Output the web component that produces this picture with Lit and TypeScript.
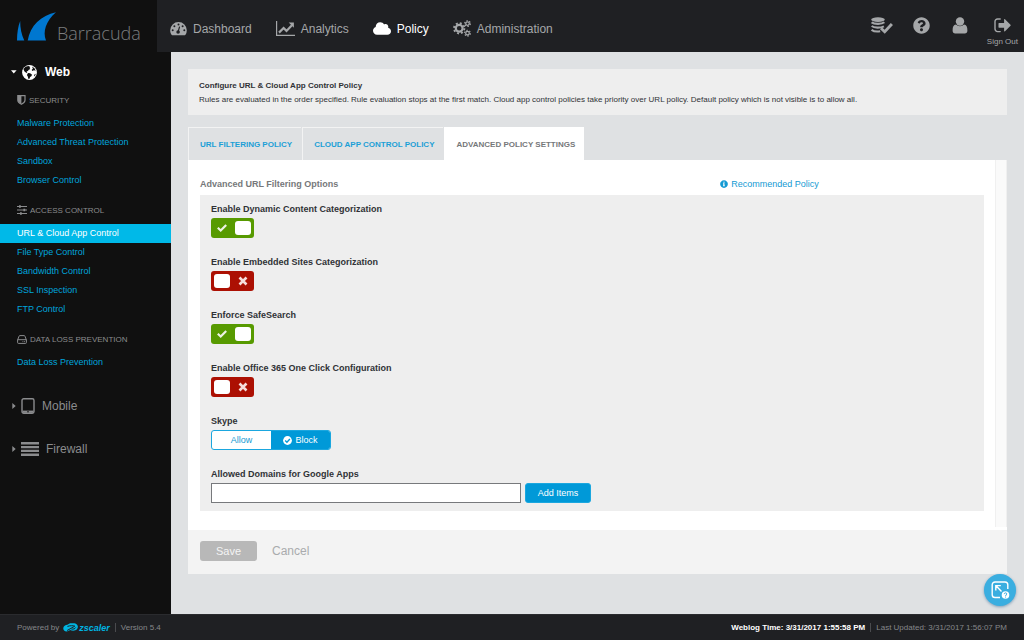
import { LitElement, html, svg, css, nothing } from "lit";
import { customElement, property, state } from "lit/decorators.js";
import { classMap } from "lit/directives/class-map.js";

const dashboardIcon = html`<svg width="17" height="15" viewBox="0 0 17 15" aria-hidden="true">
  <path fill="currentColor" fill-rule="evenodd" d="M8.5 1A8.3 8.3 0 0 0 .2 9.300c0 1.700.5 3.200 1.300 4.500.2.300.4.400.7.400h12.600c.3 0 .5-.1.7-.4a8.300 8.300 0 0 0 1.300-4.500A8.300 8.300 0 0 0 8.500 1z"/>
  <g fill="#1f2023"><circle cx="2.700" cy="9.300" r="1"/><circle cx="4.400" cy="5.200" r="1"/><circle cx="8.500" cy="3.400" r="1"/><circle cx="12.600" cy="5.200" r="1"/><circle cx="14.300" cy="9.300" r="1"/><circle cx="8.100" cy="11" r="1.800"/></g>
  <path stroke="#1f2023" stroke-width="1.100" stroke-linecap="round" d="M8.200 10.500L9.500 6"/>
</svg>`;
const chartIcon = html`<svg width="19" height="15" viewBox="0 0 19 15" fill="none" aria-hidden="true">
  <path stroke="currentColor" stroke-width="1.200" d="M.6 0v14.400H19"/>
  <path stroke="currentColor" stroke-width="2.200" d="M3 11.600l4.600-4.600 2.900 2.900 5.400-5.600"/>
  <path fill="currentColor" d="M12.700 1.600h5.200v5.200z"/>
</svg>`;
const cloudIcon = html`<svg width="18" height="15" viewBox="0 16 640 480" aria-hidden="true"><path fill="currentColor" d="M537.6 226.6c4.100-10.700 6.400-22.400 6.400-34.600 0-53-43-96-96-96-19.700 0-38.100 6-53.300 16.200C367 64.200 315.300 32 256 32c-88.400 0-160 71.600-160 160 0 2.700.1 5.400.2 8.100C40.200 219.800 0 273.200 0 336c0 79.500 64.500 144 144 144h368c70.700 0 128-57.300 128-128 0-61.900-44-113.600-102.400-125.400z"/></svg>`;
const gearsIcon = html`<svg width="18" height="17" viewBox="0 0 18 17" fill="none" stroke="currentColor" aria-hidden="true">
  <circle cx="6.200" cy="8.300" r="3.400" stroke-width="2.200"/>
  <circle cx="6.200" cy="8.300" r="5.200" stroke-width="1.800" stroke-dasharray="2 2.084"/>
  <circle cx="14.500" cy="3.600" r="1.800" stroke-width="1.300"/>
  <circle cx="14.500" cy="3.600" r="2.900" stroke-width="1.100" stroke-dasharray="1.500 1.537"/>
  <circle cx="14.500" cy="13.200" r="1.800" stroke-width="1.300"/>
  <circle cx="14.500" cy="13.200" r="2.900" stroke-width="1.100" stroke-dasharray="1.500 1.537"/>
</svg>`;
const databaseIcon = html`<svg width="22" height="17" viewBox="0 0 22 17" fill="none" aria-hidden="true">
  <ellipse cx="7" cy="2.600" rx="6.800" ry="2.400" fill="currentColor"/>
  <path stroke="currentColor" stroke-width="2.100" d="M.6 5.300c2.500 2.100 10.300 2.100 12.800 0M.6 9c2.500 2.100 9 2.100 12.300.3M.6 12.800c2 1.700 5.600 2 8.600 1.500"/>
  <path stroke="currentColor" stroke-width="2.900" d="M10 11.300l3.700 3.500L20.900 7"/>
</svg>`;
const questionIcon = html`<svg width="17" height="17" viewBox="0 0 512 512" aria-hidden="true"><path fill="currentColor" d="M504 256c0 136.997-111.043 248-248 248S8 392.997 8 256C8 119.083 119.043 8 256 8s248 111.083 248 248zM262.655 90c-54.497 0-89.255 22.957-116.549 63.758-3.536 5.286-2.353 12.415 2.715 16.258l34.699 26.310c5.205 3.947 12.621 3.008 16.665-2.122 17.864-22.658 30.113-35.797 57.303-35.797 20.429 0 45.698 13.148 45.698 32.958 0 14.976-12.363 22.667-32.534 33.976C247.128 238.528 216 254.941 216 296v4c0 6.627 5.373 12 12 12h56c6.627 0 12-5.373 12-12v-1.333c0-28.462 83.186-29.647 83.186-106.667 0-58.002-60.165-102-116.531-102zM256 338c-25.365 0-46 20.635-46 46 0 25.364 20.635 46 46 46s46-20.636 46-46c0-25.365-20.635-46-46-46z"/></svg>`;
const userIcon = html`<svg width="16" height="17" viewBox="0 0 16 17" aria-hidden="true"><g fill="currentColor"><circle cx="8" cy="4.500" r="4.200"/><path d="M4 7.600C1.500 7.800.6 10 .6 13.700c0 1.600 1 2.700 2.600 2.700h9.600c1.600 0 2.600-1.100 2.600-2.700 0-3.700-.9-5.900-3.400-6.100A5.500 5.500 0 0 1 8 9.300a5.500 5.500 0 0 1-4-1.700z"/></g></svg>`;
const signOutIcon = html`<svg width="17" height="15" viewBox="0 0 17 15" fill="none" aria-hidden="true">
  <path stroke="currentColor" stroke-width="1.400" stroke-linecap="round" d="M6.200 1H3.500A2.500 2.500 0 0 0 1 3.500v7.600a2.500 2.500 0 0 0 2.500 2.500h2.700"/>
  <path fill="currentColor" d="M5 4.900h5.100V1.600c0-.5.500-.7.900-.3l5.500 5.500c.3.300.3.700 0 1L11 13.300c-.4.400-.9.200-.9-.3V9.800H5c-.3 0-.5-.2-.5-.5V5.400c0-.3.200-.5.500-.5z"/>
</svg>`;
const globeIcon = html`<svg width="15" height="15" viewBox="0 0 15 15" aria-hidden="true"><circle cx="7.500" cy="7.500" r="7.400" fill="#fff"/>
  <path fill="#101010" d="M2.300 2.900C3.500 1.700 5 1.200 6.500 1.100l1.800.9-.8 1 .9.900-1.600.8-.9 1.400-1.300.3.700 1.100-.6.400L2.700 6.700 1.500 4.500zM10 1.600l2.500 1.700 1.200 2.400-1.700-.5-1.800.7-.5-1.200 1.200-.9zM6 8.100l2.100.2 2 1.400-.8 1.600-1.200.8-.8 1.900-1-.3-.5-2.300-.9-1.500zM12.600 9.200l1.200-.4-.9 2.200-.9.200z"/></svg>`;
const shieldIcon = html`<svg width="9" height="10" viewBox="0 0 9 10" aria-hidden="true"><path fill="none" stroke="currentColor" stroke-width="1.200" d="M.8.7h7.200v4.600c0 1.800-1.500 3-3.600 4C2.300 8.300.8 7.100.8 5.300z"/><path fill="currentColor" d="M1 1h3.400v8C2.300 8 1 7 1 5.300z"/></svg>`;
const slidersIcon = html`<svg width="10" height="10" viewBox="0 0 10 10" aria-hidden="true"><path stroke="currentColor" d="M0 1.500h10M0 5h10M0 8.500h10"/><path fill="currentColor" d="M2 .2h1.800v2.600H2zM6.400 3.700h1.800v2.600H6.400zM3 7.200h1.800v2.600H3z"/></svg>`;
const driveIcon = html`<svg width="10" height="9" viewBox="0 0 10 9" fill="none" stroke="currentColor" aria-hidden="true"><path d="M.6 5L2 1.300C2.200.8 2.400.6 2.900.6h4.200c.5 0 .7.200.9.700L9.400 5v2.600c0 .5-.3.800-.8.800H1.400c-.5 0-.8-.3-.8-.8zM.8 4.700h8.400M5.500 6.600h.8M7.200 6.600H8"/></svg>`;
const tabletIcon = html`<svg width="14" height="16" viewBox="0 0 14 16" fill="none" aria-hidden="true"><rect x="1" y=".8" width="12" height="14.400" rx="1.700" stroke="currentColor" stroke-width="1.400"/><path stroke="currentColor" stroke-width="2.200" d="M1.500 13.700h11"/><circle cx="7" cy="13.800" r=".8" fill="#101010"/></svg>`;
const barsIcon = html`<svg width="18" height="14" viewBox="0 0 18 14" aria-hidden="true"><path stroke="currentColor" stroke-width="2.400" d="M0 1.200h18M0 5.100h18M0 8.900h18M0 12.800h18"/></svg>`;
const caret = (open: boolean) => html`<svg width="6" height="6" viewBox="0 0 6 6" aria-hidden="true"><path fill="currentColor" d=${open ? "M0 1.300h5.600L2.800 4.500z" : "M1.300.1L4.700 3 1.300 6z"}/></svg>`;
const infoIcon = html`<svg width="8" height="8" viewBox="0 0 512 512" aria-hidden="true"><path fill="currentColor" d="M256 8C119.043 8 8 119.083 8 256c0 136.997 111.043 248 248 248s248-111.003 248-248C504 119.083 392.957 8 256 8zm0 90c23.196 0 42 18.804 42 42s-18.804 42-42 42-42-18.804-42-42 18.804-42 42-42zm66 294c0 6.627-5.373 12-12 12h-108c-6.627 0-12-5.373-12-12v-34c0-6.627 5.373-12 12-12h12v-74h-12c-6.627 0-12-5.373-12-12v-34c0-6.627 5.373-12 12-12h74c6.627 0 12 5.373 12 12v120h12c6.627 0 12 5.373 12 12v34z"/></svg>`;
const checkCircle = html`<svg class="check" width="9" height="9" viewBox="0 0 9 9" aria-hidden="true"><circle cx="4.500" cy="4.500" r="4.400" fill="#fff"/><path fill="none" stroke="#0099d8" stroke-width="1.400" d="M2.200 4.600l1.700 1.600 3-3.100"/></svg>`;
const barracudaMark = html`<svg width="39" height="29" viewBox="0 0 39 29" fill="#0077d0" aria-hidden="true"><path d="M3.200 9C1 14.500.1 21 0 28.500h7.300C4.500 22.500 3.100 16 3.200 9zM39 .2C24 3.500 13.200 13.500 10.700 28.500H29C25.500 19.500 29 9 39 .2z"/></svg>`;
const zscalerMark = html`<svg width="16" height="11" viewBox="0 0 18 11" aria-hidden="true"><path fill="#00b5e2" d="M5.200 9.800C2 10.200.2 8.600.3 6.300.4 4 2.800 2.600 5 2.500 6.400.8 8.700.3 10.600.8c1.700-.3 3.900.1 5.200 1.500 2 2.300.5 5.300-2 6.400-2 .9-4.300.3-5.700-.5z"/><path fill="none" stroke="#1f2023" stroke-width="1.100" d="M5 4.300c2.800-1 6.500-1.100 8.300-.3L4.600 8.900M9.500 7.300c2.300.3 4-.4 4.700-1.800"/></svg>`;

@customElement("toggle-switch")
export class ToggleSwitch extends LitElement {
  @property() label = "";
  @property({ type: Boolean }) on = false;

  static styles = css`
    :host { display: block; }
    .title { display: block; line-height: 12px; margin-bottom: 3px; font-weight: bold; }
    .track { display: grid; width: 43px; height: 20px; }
    .box, .face { grid-area: 1 / 1; }
    .box { appearance: none; margin: 0; width: 43px; height: 20px; border-radius: 3px; background: #ac1003; cursor: pointer; }
    .box:checked { background: #579a00; }
    .face { display: flex; align-items: center; padding: 0 3px; gap: 8px; pointer-events: none; }
    .face.on { flex-direction: row-reverse; }
    .knob { width: 16px; height: 14px; border-radius: 3px; background: #fff; }
  `;

  render() {
    const mark = this.on
      ? svg`<path fill="none" stroke="#eef3e4" stroke-width="2.200" d="M.8 4.800l2.900 2.700L9.200 2"/>`
      : svg`<path fill="none" stroke="#f6dedc" stroke-width="2.600" d="M1.500 1.500l7 7M8.500 1.500l-7 7"/>`;
    return html`
      <label class="title" for="box">${this.label}</label>
      <div class="track">
        <input class="box" id="box" type="checkbox" role="switch" .checked=${this.on}
          @change=${(e: Event) => (this.on = (e.target as HTMLInputElement).checked)} />
        <div class=${classMap({ face: true, on: this.on })}>
          <span class="knob"></span>
          <svg width="10" height="10" viewBox="0 0 10 10" aria-hidden="true">${mark}</svg>
        </div>
      </div>`;
  }
}

@customElement("side-nav")
export class SideNav extends LitElement {
  private groups = [
    { title: "SECURITY", icon: shieldIcon, links: ["Malware Protection", "Advanced Threat Protection", "Sandbox", "Browser Control"] },
    { title: "ACCESS CONTROL", icon: slidersIcon, links: ["URL & Cloud App Control", "File Type Control", "Bandwidth Control", "SSL Inspection", "FTP Control"] },
    { title: "DATA LOSS PREVENTION", icon: driveIcon, links: ["Data Loss Prevention"] },
  ];
  @state() private current = "URL & Cloud App Control";

  static styles = css`
    :host { display: block; background: #101010; color: #8b8c8e; padding-top: 12px; }
    svg { display: block; flex: none; }
    .top { all: unset; box-sizing: border-box; display: flex; align-items: center; width: 100%; height: 20px; padding-left: 11px; font-size: 12px; cursor: pointer; margin-top: 23px; }
    .top .icon { margin: 0 7px 0 4px; }
    .web { height: 16px; margin: 0; color: #fff; font-weight: bold; }
    .mobile { margin-top: 24px; }
    .web .icon { margin: 0 8px 0 5px; }
    .heading { display: flex; align-items: center; gap: 3px; height: 12px; margin: 14px 0 8px; padding-left: 17px; font-size: 8px; font-weight: normal; }
    .list { list-style: none; margin: 0; padding: 0; }
    .link { display: block; padding-left: 17px; font-size: 9px; line-height: 19px; color: #00a5dc; text-decoration: none; }
    .link.current { background: #00b9e8; color: #fff; }
  `;

  render() {
    return html`
      <button class="top web" aria-expanded="true">${caret(true)}<span class="icon">${globeIcon}</span>Web</button>
      ${this.groups.map((g) => html`
        <h2 class="heading">${g.icon}<span>${g.title}</span></h2>
        <ul class="list">
          ${g.links.map((l) => html`<li><a href="#" class=${classMap({ link: true, current: l === this.current })}
            aria-current=${l === this.current ? "page" : nothing}
            @click=${(e: Event) => { e.preventDefault(); this.current = l; }}>${l}</a></li>`)}
        </ul>`)}
      <button class="top mobile" aria-expanded="false">${caret(false)}<span class="icon">${tabletIcon}</span>Mobile</button>
      <button class="top" aria-expanded="false">${caret(false)}<span class="icon">${barsIcon}</span>Firewall</button>`;
  }
}

@customElement("policy-settings")
export class PolicySettings extends LitElement {
  @state() private tab = 2;
  @state() private skype = "Block";
  private tabs = ["URL FILTERING POLICY", "CLOUD APP CONTROL POLICY", "ADVANCED POLICY SETTINGS"];

  static styles = css`
    :host { display: block; padding: 17px; font-size: 9px; color: #303236; }
    svg { display: block; flex: none; }
    button, input { font: inherit; }
    .intro { background: #eee; padding: 10px 11px 8px; line-height: 14px; margin-bottom: 12px; font-size: 8px; }
    .intro h1, .intro p { margin: 0; font-size: inherit; }
    .tabs { display: flex; gap: 1px; }
    .tab { border: 0; border-top: 1px solid #f3f3f3; border-left: 1px solid #f3f3f3; background: #dfe1e3; color: #1c9fd6; font-size: 8px; font-weight: bold; height: 33px; padding: 0 9px 0 11px; cursor: pointer; }
    .tab.active { background: #fff; color: #76787a; border-color: #fff; }
    .panel { display: grid; grid-template-columns: 1fr 12px; background: #fff; padding-bottom: 3px; }
    .rail { background: #fafafa; border: solid #f0f0f0; border-width: 0 1px; }
    .content { padding: 18px 11px 16px 12px; }
    .bar { display: grid; grid-template-columns: 521fr 264fr; align-items: center; line-height: 12px; margin-bottom: 5px; }
    .bar h2 { margin: 0; font-size: 9px; color: #76787a; }
    .bar a { display: flex; align-items: center; gap: 3px; color: #149ad3; text-decoration: none; }
    .form { display: grid; gap: 18px; background: #eee; padding: 8px 11px; }
    .title { display: block; padding: 0; line-height: 12px; margin-bottom: 3px; font-weight: bold; }
    .group { border: 0; margin: 0; padding: 0; }
    .segments { display: flex; width: 120px; height: 20px; box-sizing: border-box; border: 1px solid #1ba7df; border-radius: 3px; overflow: hidden; background: #fff; }
    .segment { flex: 1; display: flex; align-items: center; justify-content: center; color: #149ad3; cursor: pointer; }
    .segment.on { background: #0099d8; color: #fff; }
    .segment input { appearance: none; margin: 0; width: 0; height: 0; }
    .segment:has(input:focus-visible) { outline: 1px solid #303236; }
    .check { margin-right: 3px; }
    .row { display: flex; gap: 4px; }
    .domains { width: 310px; height: 20px; box-sizing: border-box; border: 1px solid #77797c; background: #fff; padding: 0 4px; }
    .add { width: 66px; height: 20px; border: 1px solid #1ba7df; border-radius: 3px; background: #0099d8; color: #fff; padding: 0; cursor: pointer; }
    .actions { display: flex; align-items: center; gap: 15px; padding: 11px 12px 13px; background: #f3f3f3; }
    .save { width: 57px; height: 20px; border: 0; border-radius: 3px; background: #b8b8b8; color: #f4f4f4; font-size: 11px; padding: 0; }
    .cancel { border: 0; background: none; color: #a9abad; font-size: 12px; line-height: 20px; padding: 0; cursor: pointer; }
  `;

  render() {
    return html`
      <section class="intro">
        <h1>Configure URL &amp; Cloud App Control Policy</h1>
        <p>Rules are evaluated in the order specified. Rule evaluation stops at the first match. Cloud app control policies take priority over URL policy. Default policy which is not visible is to allow all.</p>
      </section>
      <div class="tabs" role="tablist">
        ${this.tabs.map((t, i) => html`<button role="tab" class=${classMap({ tab: true, active: i === this.tab })}
          aria-selected=${i === this.tab ? "true" : "false"} @click=${() => (this.tab = i)}>${t}</button>`)}
      </div>
      <section class="panel" role="tabpanel">
        <div class="content">
          <div class="bar">
            <h2>Advanced URL Filtering Options</h2>
            <a href="#">${infoIcon}Recommended Policy</a>
          </div>
          <div class="form">
            <toggle-switch label="Enable Dynamic Content Categorization" on></toggle-switch>
            <toggle-switch label="Enable Embedded Sites Categorization"></toggle-switch>
            <toggle-switch label="Enforce SafeSearch" on></toggle-switch>
            <toggle-switch label="Enable Office 365 One Click Configuration"></toggle-switch>
            <fieldset class="group">
              <legend class="title">Skype</legend>
              <div class="segments">
                ${["Allow", "Block"].map((o) => html`<label class=${classMap({ segment: true, on: o === this.skype })}>
                  <input type="radio" name="skype" .checked=${o === this.skype} @change=${() => (this.skype = o)} />${o === this.skype ? checkCircle : nothing}${o}</label>`)}
              </div>
            </fieldset>
            <div>
              <label class="title" for="domains">Allowed Domains for Google Apps</label>
              <div class="row">
                <input class="domains" id="domains" type="text" />
                <button class="add">Add Items</button>
              </div>
            </div>
          </div>
        </div>
        <div class="rail"></div>
      </section>
      <div class="actions">
        <button class="save">Save</button>
        <button class="cancel">Cancel</button>
      </div>`;
  }
}

@customElement("app-root")
export class AppRoot extends LitElement {
  private nav = [
    { text: "Dashboard", icon: dashboardIcon },
    { text: "Analytics", icon: chartIcon },
    { text: "Policy", icon: cloudIcon },
    { text: "Administration", icon: gearsIcon },
  ];
  @state() private section = "Policy";

  static styles = css`
    :host { display: grid; grid-template: 52px 1fr auto / 171px 1fr; min-height: 100vh; background: #dfe1e3; font-family: "Liberation Sans", Arial, Helvetica, sans-serif; }
    svg { display: block; flex: none; }
    .header { grid-column: 1 / -1; display: flex; background: #1f2023; color: #a5a7a9; }
    .brand { width: 157px; box-sizing: border-box; display: flex; align-items: center; gap: 1px; padding: 1px 0 0 17px; background: #101010; text-decoration: none; }
    .name { font: 300 18px/20px "Open Sans", "Liberation Sans", sans-serif; color: #7b7d7f; padding-top: 12px; }
    .nav { display: flex; align-items: center; gap: 24px; padding: 5px 0 0 13px; }
    .item { display: flex; align-items: center; gap: 6px; color: inherit; font-size: 12px; text-decoration: none; }
    .item.current { color: #fff; }
    .tools { display: flex; gap: 14px; margin-left: auto; padding: 16px 6px 0 0; }
    .tool { display: grid; grid-template-rows: 18px 12px; place-items: center; align-content: start; gap: 2px; min-width: 25px; padding: 0; border: 0; background: none; color: inherit; font: 8px/12px "Liberation Sans", Arial, sans-serif; cursor: pointer; }
    .footer { grid-column: 1 / -1; display: flex; align-items: center; height: 26px; box-sizing: border-box; padding: 0 17px; background: #1f2023; color: #85878a; font-size: 8px; border-top: 1px solid #2a2b2e; }
    .logo { display: flex; align-items: center; margin-left: 4px; color: #00b5e2; font-size: 9px; font-weight: bold; font-style: italic; }
    .sep { width: 1px; height: 9px; margin: 0 5px; background: #4a4b4e; }
    .time { margin-left: auto; color: #fff; font-weight: bold; }
    .help { position: fixed; right: 8px; bottom: 34px; width: 32px; height: 32px; display: grid; place-items: center; padding: 0; border: 0; border-radius: 50%; background: #3aaee0; box-shadow: 0 1px 3px #7d9db8; cursor: pointer; }
  `;

  render() {
    return html`
      <header class="header">
        <a class="brand" href="#">${barracudaMark}<span class="name">Barracuda</span></a>
        <nav class="nav" aria-label="Main">
          ${this.nav.map((n) => html`<a href="#" class=${classMap({ item: true, current: n.text === this.section })}
            @click=${(e: Event) => { e.preventDefault(); this.section = n.text; }}>${n.icon}${n.text}</a>`)}
        </nav>
        <div class="tools">
          <button class="tool" aria-label="Activation">${databaseIcon}</button>
          <button class="tool" aria-label="Help">${questionIcon}</button>
          <button class="tool" aria-label="Profile">${userIcon}</button>
          <button class="tool">${signOutIcon}<span>Sign Out</span></button>
        </div>
      </header>
      <side-nav></side-nav>
      <main><policy-settings></policy-settings></main>
      <footer class="footer">
        <span>Powered by</span><span class="logo">${zscalerMark}zscaler</span><span class="sep"></span><span>Version 5.4</span>
        <span class="time">Weblog Time: 3/31/2017 1:55:58 PM</span><span class="sep"></span><span>Last Updated: 3/31/2017 1:56:07 PM</span>
      </footer>
      <button class="help" aria-label="Open guide">
        <svg width="20" height="20" viewBox="0 0 20 20" fill="none" stroke="#fff" stroke-width="1.400" aria-hidden="true">
          <path d="M10 17.500H5A2.800 2.800 0 0 1 2.200 14.700V4.800A2.800 2.800 0 0 1 5 2h10a2.800 2.800 0 0 1 2.800 2.800V9M11.500 11.500L6.500 6.300M5.800 10.500V5.600h5"/>
          <circle cx="15.500" cy="15" r="3.800" fill="#fff" stroke="none"/>
          <path stroke="#3aaee0" stroke-width="1" d="M14.200 14.100c.1-1.700 2.600-1.600 2.600-.1 0 .9-1.300.9-1.300 2M15.500 16.600v.9"/>
        </svg>
      </button>`;
  }
}
